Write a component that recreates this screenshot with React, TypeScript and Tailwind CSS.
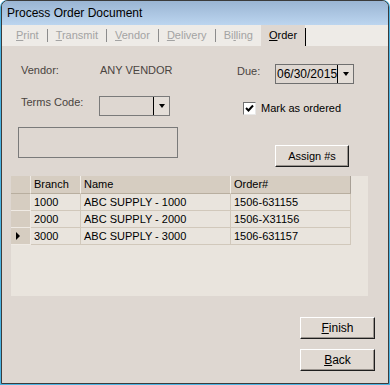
import React from "react";

const FONT = { fontFamily: '"Liberation Sans", Arial, sans-serif' };

function Mn({ pre = "", u, post }: { pre?: string; u: string; post: string }) {
  return (
    <span>
      {pre}
      <span className="underline underline-offset-[1px]">{u}</span>
      {post}
    </span>
  );
}

function DropBtn() {
  return (
    <div className="flex h-full w-[16px] items-center justify-center border-l border-black bg-[#e4ded8]">
      <div className="h-0 w-0 border-x-[3.5px] border-t-[4px] border-x-transparent border-t-black" />
    </div>
  );
}

function WinButton({ children, w, text = "text-[11px]" }: { children: React.ReactNode; w: string; text?: string }) {
  return (
    <button
      type="button"
      className={`${w} ${text} h-[22px] border border-t-white border-l-white border-r-[#1e1e1e] border-b-[#1e1e1e] bg-[#e0d9d2] text-black shadow-[inset_-1px_-1px_0_#9a948e]`}
    >
      {children}
    </button>
  );
}

const rows = [
  { branch: "1000", name: "ABC SUPPLY - 1000", order: "1506-631155" },
  { branch: "2000", name: "ABC SUPPLY - 2000", order: "1506-X31156" },
  { branch: "3000", name: "ABC SUPPLY - 3000", order: "1506-631157", current: true },
];

export default function App() {
  return (
    <div className="h-[385px] w-[390px] bg-white" style={FONT}>
      <div className="h-full w-full rounded-t-[7px] bg-[#4bb3e2] px-px pb-px">
        <div className="flex h-full flex-col overflow-hidden rounded-t-[7px] border border-[#3b3b3b] bg-[#ded7d1]">
          {/* Title bar */}
          <div className="flex h-[24px] items-center bg-gradient-to-b from-[#9ab5d3] to-[#bcd5ef] pl-[5px] text-[12px] text-black">
            Process Order Document
          </div>

          {/* Tab strip */}
          <div className="flex h-[21px] items-stretch bg-[#eeebe7] pl-[6px] text-[11px] text-[#a3a3a3]">
            <div className="flex items-center px-[8px]">
              <Mn u="P" post="rint" />
            </div>
            <div className="my-[4px] w-px bg-[#8c8c8c]" />
            <div className="flex items-center px-[8px]">
              <Mn u="T" post="ransmit" />
            </div>
            <div className="my-[4px] w-px bg-[#8c8c8c]" />
            <div className="flex items-center px-[8px]">
              <Mn u="V" post="endor" />
            </div>
            <div className="my-[4px] w-px bg-[#8c8c8c]" />
            <div className="flex items-center px-[8px]">
              <Mn u="D" post="elivery" />
            </div>
            <div className="my-[4px] w-px bg-[#8c8c8c]" />
            <div className="flex items-center px-[8px]">
              <Mn pre="Bi" u="l" post="ling" />
            </div>
            <div className="flex items-center bg-[#ded7d1] px-[8px] text-black">
              <Mn u="O" post="rder" />
            </div>
            <div className="mt-[3px] w-px bg-black" />
          </div>

          {/* Content */}
          <div className="flex flex-1 flex-col text-[11px]">
            <div className="flex h-[130px]">
              {/* Left column */}
              <div className="ml-[16px] flex w-[160px] flex-col">
                <div className="mt-[17px] flex h-[14px] items-center pl-[3px] leading-[14px] text-[#4a4440]">
                  <span className="w-[79px]">Vendor:</span>
                  <span>ANY VENDOR</span>
                </div>
                <div className="mt-[19px] flex h-[20px] items-start pl-[3px]">
                  <span className="-mt-[1px] w-[78px] leading-[14px] text-[#4a4440]">Terms Code:</span>
                  <div className="flex h-[20px] w-[71px] border border-[#7a7a7a]">
                    <div className="flex-1" />
                    <DropBtn />
                  </div>
                </div>
                <div className="mt-[11px] h-[31px] w-[160px] border border-[#7a7a7a]" />
              </div>

              {/* Right column */}
              <div className="ml-[59px] flex flex-col">
                <div className="mt-[18px] flex h-[20px] items-start">
                  <span className="w-[38px] leading-[14px] text-[#4a4440]">Due:</span>
                  <div className="flex h-[20px] w-[79px] border border-[#6f6f6f]">
                    <span className="flex-1 pl-[1px] text-[12px] leading-[18px] text-black">06/30/2015</span>
                    <DropBtn />
                  </div>
                </div>
                <div className="ml-[6px] mt-[18px] flex h-[13px] items-center gap-[5px]">
                  <div className="flex h-[13px] w-[13px] items-center justify-center border border-t-[#6f6f6f] border-l-[#6f6f6f] border-r-[#e8e8e8] border-b-[#e8e8e8] bg-white">
                    <svg width="9" height="9" viewBox="0 0 9 9">
                      <path d="M1 4 L3.5 6.5 L8 1.5" stroke="black" strokeWidth="2" fill="none" />
                    </svg>
                  </div>
                  <span className="text-black">Mark as ordered</span>
                </div>
                <div className="ml-[38px] mt-[30px]">
                  <WinButton w="w-[74px]">Assign #s</WinButton>
                </div>
              </div>
            </div>

            {/* Grid */}
            <div className="ml-[9px] h-[120px] w-[357px] bg-[#e9e4dd]">
              <div className="grid grid-cols-[20px_50px_150px_120px] text-black">
                <div className="h-[18px] border-b border-r border-b-[#b8ae9f] border-r-[#efeae4] bg-[#d6cdc1]" />
                <div className="flex h-[18px] items-center border-b border-r border-b-[#b8ae9f] border-r-[#f3efe9] bg-[#d6cdc1] pl-[3px]">
                  Branch
                </div>
                <div className="flex h-[18px] items-center border-b border-r border-b-[#b8ae9f] border-r-[#f3efe9] bg-[#d6cdc1] pl-[3px]">
                  Name
                </div>
                <div className="flex h-[18px] items-center border-b border-r border-b-[#b8ae9f] border-r-[#a8a096] bg-[#d6cdc1] pl-[3px]">
                  Order#
                </div>
                {rows.map((r) => (
                  <React.Fragment key={r.branch}>
                    <div className="flex h-[17px] items-center border-b border-r border-b-[#efeae4] border-r-[#efeae4] bg-[#d6cdc1] pl-[5px]">
                      {r.current && (
                        <div className="h-0 w-0 border-y-[4px] border-l-[4px] border-y-transparent border-l-black" />
                      )}
                    </div>
                    <div className="flex h-[17px] items-center border-b border-r border-[#d1c8bb] pl-[3px]">{r.branch}</div>
                    <div className="flex h-[17px] items-center border-b border-r border-[#d1c8bb] pl-[3px]">{r.name}</div>
                    <div className="flex h-[17px] items-center border-b border-r border-[#d1c8bb] pl-[3px]">{r.order}</div>
                  </React.Fragment>
                ))}
              </div>
            </div>

            {/* Buttons */}
            <div className="mt-[21px] flex flex-col items-end gap-[10px] pr-[13px]">
              <WinButton w="w-[75px]" text="text-[12px]">
                <Mn u="F" post="inish" />
              </WinButton>
              <WinButton w="w-[75px]" text="text-[12px]">
                <Mn u="B" post="ack" />
              </WinButton>
            </div>
          </div>
        </div>
      </div>
    </div>
  );
}
